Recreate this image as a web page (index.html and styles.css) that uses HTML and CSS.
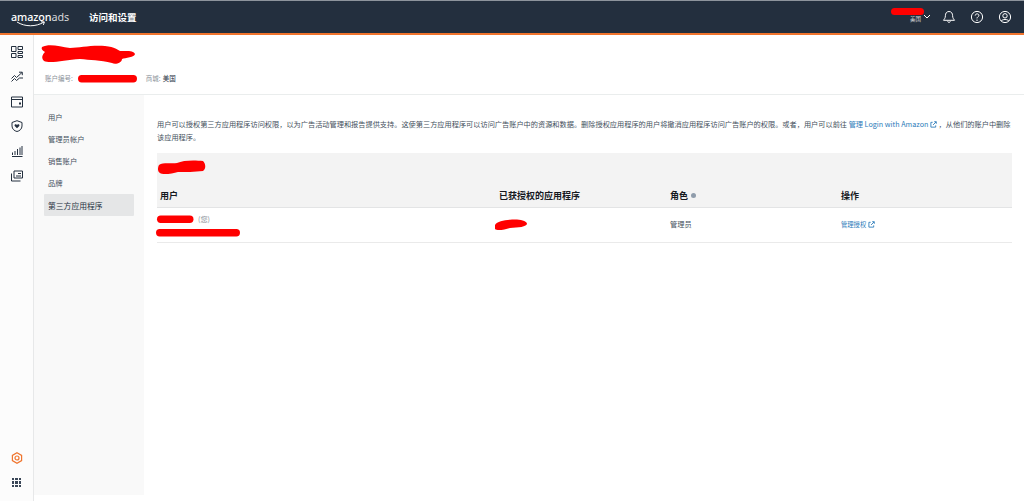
FILE: index.html
```html
<!DOCTYPE html>
<html lang="zh">
<head>
<meta charset="utf-8">
<title>访问和设置</title>
<link rel="stylesheet" href="styles.css">
</head>
<body>
<header class="topbar">
  <div class="brand">
    <div class="logo"><span class="logo-a">amazon</span><span class="logo-b">ads</span>
      <svg class="smile" viewBox="0 0 30 6"><path d="M1 1c8 5 19 5 27 0M25 .8l3.4.1-1 3" fill="none" stroke="#fff" stroke-width="1"/></svg>
    </div>
    <div class="title">访问和设置</div>
  </div>
  <div class="top-actions">
    <div class="country"><span class="country-name">美国</span>
      <svg class="ico-s" viewBox="0 0 8 6"><path d="M1 1l3 3 3-3" fill="none" stroke="#fff" stroke-width="1"/></svg>
    </div>
    <svg class="ico" viewBox="0 0 14 14"><path d="M7 1.500c-2.500 0-3.600 2-3.600 4.200 0 2.600-1.400 3.600-1.900 4.600h11c-.5-1-1.900-2-1.900-4.600C10.600 3.500 9.500 1.500 7 1.500zM5.500 11.500c.3 1 2.700 1 3 0" fill="none" stroke="#fff" stroke-width="1"/></svg>
    <svg class="ico" viewBox="0 0 14 14"><circle cx="7" cy="7" r="5.600" fill="none" stroke="#fff" stroke-width="1"/><path d="M5.200 5.600c0-2.300 3.700-2.300 3.700-.2 0 1.400-1.900 1.400-1.900 3" fill="none" stroke="#fff" stroke-width="1"/><circle cx="7" cy="10.200" r=".7" fill="#fff"/></svg>
    <svg class="ico" viewBox="0 0 14 14"><circle cx="7" cy="7" r="5.600" fill="none" stroke="#fff" stroke-width="1"/><circle cx="7" cy="5.800" r="2.200" fill="none" stroke="#fff" stroke-width="1"/><path d="M3.300 11c.8-2 6.600-2 7.400 0" fill="none" stroke="#fff" stroke-width="1"/></svg>
  </div>
</header>
<div class="shell">
  <aside class="rail">
    <div class="rail-top">
      <svg class="rail-ico" viewBox="0 0 12 12"><path d="M.5.500h4.500v5H.5zM7 .5h4.500v3H7zM7 5.500h4.500v2H7zM7 9.500h4.500v2H7zM.5 7.500h4.500v4H.5z" fill="none" stroke="#232f3e" stroke-width="1"/></svg>
      <svg class="rail-ico" viewBox="0 0 12 12"><path d="M.5 7.500l3-3 2 2L11 1.500M8 1.200h3.300v3M.5 10.500l3-3 2 2 3-2.500 3.500 0" fill="none" stroke="#232f3e" stroke-width="1"/></svg>
      <svg class="rail-ico" viewBox="0 0 12 12"><path d="M.5 1h11v10H.5zM.5 3.500h11" fill="none" stroke="#232f3e" stroke-width="1"/><rect x="8" y="6.500" width="2" height="2" fill="#232f3e"/></svg>
      <svg class="rail-ico" viewBox="0 0 12 12"><path d="M6 .7l5 1.800v3.500c0 3-2.500 5-5 5.500-2.500-.5-5-2.500-5-5.500V2.500z" fill="none" stroke="#232f3e" stroke-width="1"/><path d="M6 8.300L3.700 5.900c-.8-1.300 1.500-2.200 2.300-.9.800-1.300 3.100-.4 2.300.9z" fill="#232f3e"/></svg>
      <svg class="rail-ico" viewBox="0 0 12 12"><path d="M1 11.500h10.500M1.500 7.500v2.500M4 6v4M6.500 4v6M9 2.500V10M11 1v9" fill="none" stroke="#232f3e" stroke-width="1"/></svg>
      <svg class="rail-ico" viewBox="0 0 12 12"><path d="M3 1h8.500v7H3zM.5 3.500v7.500h9" fill="none" stroke="#232f3e" stroke-width="1"/><path d="M5 6h5M7 3.500h3" stroke="#232f3e" stroke-width="1"/></svg>
    </div>
    <div class="rail-bottom">
      <svg class="rail-ico" viewBox="0 0 12 12"><path d="M6 .8l4.600 2.600v5.200L6 11.200 1.400 8.600V3.400z" fill="none" stroke="#f0742d" stroke-width="1.200"/><circle cx="6" cy="6" r="2" fill="none" stroke="#f0742d" stroke-width="1.200"/></svg>
      <div class="apps"><i></i><i></i><i></i><i></i><i></i><i></i><i></i><i></i><i></i></div>
    </div>
  </aside>
  <main class="content">
    <section class="account">
      <p class="account-meta"><span class="meta-label">账户编号:</span><span class="meta-gap"></span><span class="meta-label">商城:</span><span class="meta-value">美国</span></p>
    </section>
    <div class="panel">
      <nav class="side">
        <a class="side-item">用户</a>
        <a class="side-item">管理员帐户</a>
        <a class="side-item">销售账户</a>
        <a class="side-item">品牌</a>
        <a class="side-item active">第三方应用程序</a>
      </nav>
      <div class="main">
        <p class="intro">用户可以授权第三方应用程序访问权限，以为广告活动管理和报告提供支持。这使第三方应用程序可以访问广告账户中的资源和数据。删除授权应用程序的用户将撤消应用程序访问广告账户的权限。或者，用户可以前往 <a class="link">管理 Login with Amazon <svg class="ext" viewBox="0 0 8 8"><path d="M3 1.500H1v5.500h5.500V5M3.500 4.500L7 1M4.800 .8H7.200V3.200" fill="none" stroke="#2b7bb9" stroke-width="1"/></svg></a> ，从他们的账户中删除该应用程序。</p>
        <div class="table">
          <div class="thead-top"></div>
          <div class="row head">
            <div>用户</div>
            <div>已获授权的应用程序</div>
            <div class="role-h">角色<span class="info"></span></div>
            <div>操作</div>
          </div>
          <div class="row body">
            <div class="you">(您)</div>
            <div></div>
            <div>管理员</div>
            <div><a class="link manage">管理授权 <svg class="ext" viewBox="0 0 8 8"><path d="M3 1.500H1v5.500h5.500V5M3.500 4.500L7 1M4.800 .8H7.200V3.200" fill="none" stroke="#2b7bb9" stroke-width="1"/></svg></a></div>
          </div>
        </div>
      </div>
    </div>
  </main>
</div>
<svg class="redactions" viewBox="0 0 1024 501" aria-hidden="true">
  <g fill="#ff0000">
    <path d="M42 47C50 43 60 47 70 48C80 48 90 45 105 46C115 47 118 50 120 51C125 51 134 50 135 54C135 57 125 58 122 59C122 63 115 65 112 63C100 60 90 60 80 59C65 60 50 64 44 61C40 57 44 53 45 52C42 50 41 49 42 47Z"/>
    <rect x="78" y="75" width="59" height="7.500" rx="3.700"/>
    <rect x="891" y="8" width="33" height="7" rx="3.500"/>
    <path d="M159 165C163 162 172 164 177 163C183 160 195 160 203 161C206 164 206 169 203 171C195 172 185 172 178 172C172 174 162 175 160 173C157 171 158 167 159 165Z"/>
    <rect x="157" y="215.500" width="36.500" height="7.500" rx="3.700"/>
    <rect x="156" y="229" width="84" height="7.500" rx="3.700"/>
    <path d="M495 225C497 221 505 220 512 219.500C518 219 526 220 527 223.500C527 227 518 227.500 510 228C504 230 497 231 495 229Z"/>
  </g>
</svg>
</body>
</html>
```

FILE: styles.css
```css
* { box-sizing: border-box; }
html, body { margin: 0; padding: 0; height: 501px; overflow: hidden; }
body {
  background: #fff;
  color: #232f3e;
  font-family: "Noto Sans CJK SC", "Liberation Sans", sans-serif;
  font-size: 7.200px;
  position: relative;
}
a { text-decoration: none; }
p { margin: 0; }

.topbar {
  height: 35px;
  background: #232f3e;
  border-top: 1px solid #8d949c;
  border-bottom: 2px solid #f0742d;
  display: flex;
  align-items: center;
  justify-content: space-between;
  padding-right: 12px;
  color: #fff;
}
.brand { display: flex; align-items: center; }
.logo {
  position: relative;
  margin-left: 11px;
  width: 58px;
  font-family: "Noto Sans", sans-serif;
  font-size: 10.800px;
  line-height: 12px;
  letter-spacing: -.1px;
}
.logo-a { font-weight: 500; }
.logo-b { color: #d5d7da; }
.smile { position: absolute; left: 5px; top: 10px; width: 30px; height: 6px; }
.title { margin-left: 20px; font-size: 9.500px; font-weight: 700; }
.top-actions { display: flex; align-items: center; gap: 14px; }
.country { display: flex; align-items: flex-start; gap: 2px; margin-right: -3px; height: 14px; }
.country-name { font-size: 5.500px; margin-top: 5px; line-height: 8px; color: #d5d7da; }
.ico-s { width: 8px; height: 6px; margin-top: 4px; }
.ico { width: 14px; height: 14px; display: block; }

.shell { display: flex; height: 466px; }
.rail {
  width: 34px;
  flex: none;
  border-right: 1px solid #e7e8e9;
  background: #fcfcfc;
  padding: 11px 0 14px;
  display: flex;
  flex-direction: column;
  justify-content: space-between;
  align-items: center;
}
.rail-top { display: flex; flex-direction: column; gap: 12.800px; }
.rail-bottom { display: flex; flex-direction: column; gap: 14px; align-items: center; }
.rail-ico { width: 12px; height: 12px; display: block; }
.apps { display: grid; grid-template-columns: repeat(3, 2.500px); gap: 1px; }
.apps i { width: 2.500px; height: 2.500px; background: #3a4657; display: block; }

.content { flex: 1; min-width: 0; display: flex; flex-direction: column; }
.account { height: 60px; border-bottom: 1px solid #eaeded; padding: 38px 0 0 11px; flex: none; }
.account-meta { display: flex; line-height: 11px; font-size: 6.500px; }
.meta-label { color: #8a9199; }
.meta-gap { width: 73px; }
.meta-value { margin-left: 2px; }

.panel { flex: 1; display: flex; min-height: 0; }
.side { width: 110px; flex: none; height: 400px; background: #f9f9f9; padding: 11px 10px 0 10px; font-size: 7.300px; }
.side-item { display: flex; align-items: center; height: 22px; padding-left: 4px; color: #444f5c; }
.side-item.active { background: #e5e6e7; color: #232f3e; font-size: 7.800px; border-radius: 1px; }

.main { flex: 1; min-width: 0; padding: 22.500px 12px 0 13px; }
.intro { line-height: 13px; color: #444f5c; height: 35.500px; }
.link { color: #2b7bb9; }
.manage { font-size: 6.300px; }
.ext { width: 7px; height: 7px; display: inline-block; vertical-align: -1px; }

.table { width: 855px; }
.thead-top { height: 28px; background: #f3f3f3; }
.row { display: grid; grid-template-columns: 339px 171px 171px 1fr; padding-left: 3px; }
.row.head {
  height: 27px;
  background: #f3f3f3;
  border-bottom: 1px solid #e3e4e5;
  align-items: center;
  font-size: 9px;
  font-weight: 700;
  color: #16191f;
  padding-top: 2px;
}
.row.body { height: 35px; border-bottom: 1px solid #eaeaea; align-items: center; color: #444f5c; padding-bottom: 2px; }
.you { color: #8a9199; padding-left: 38px; margin-top: -10px; }
.role-h { display: flex; align-items: center; gap: 3px; }
.info { width: 5px; height: 5px; border-radius: 50%; background: #8f9cab; display: block; }

.redactions { position: absolute; left: 0; top: 0; width: 1024px; height: 501px; pointer-events: none; }
```
